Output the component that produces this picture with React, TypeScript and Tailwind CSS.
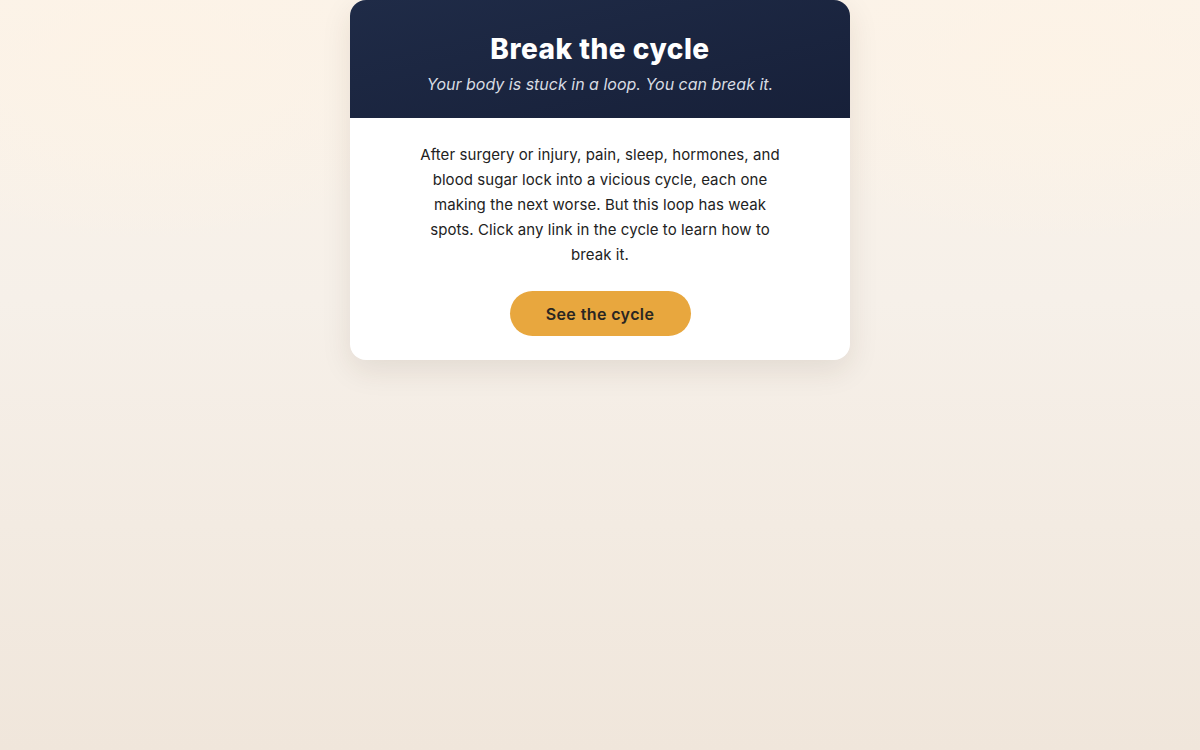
import React from "react";

export default function App() {
  return (
    <div
      className="w-full min-h-[750px] flex justify-center items-start"
      style={{
        background:
          "radial-gradient(ellipse 40% 35% at 12% 8%, rgba(253,243,230,0.9), rgba(253,243,230,0) 70%), radial-gradient(ellipse 40% 35% at 88% 8%, rgba(253,243,230,0.9), rgba(253,243,230,0) 70%), linear-gradient(to bottom, #fbf3e9 0%, #f6f0e9 40%, #f0e6db 100%)",
        fontFamily: "Inter, 'Noto Sans', sans-serif",
      }}
    >
      <div className="w-[500px] rounded-2xl overflow-hidden bg-white shadow-[0_10px_30px_rgba(60,40,20,0.10)]">
        <div className="bg-gradient-to-br from-[#1f2b47] to-[#172039] pt-[30px] pb-[22px] text-center">
          <h1 className="text-[28px] leading-[38px] font-extrabold text-white tracking-[0.5px]">
            Break the cycle
          </h1>
          <p className="mt-[4px] text-[16px] leading-[24px] italic text-[#d8dce3]">
            Your body is stuck in a loop. You can break it.
          </p>
        </div>
        <div className="pt-[24px] pb-[24px] flex flex-col items-center">
          <p className="max-w-[376px] text-center text-[15px] leading-[25px] text-[#222222] tracking-[0.08px]">
            After surgery or injury, pain, sleep, hormones, and blood sugar lock into a vicious cycle, each one making the next worse. But this loop has weak spots. Click any link in the cycle to learn how to break it.
          </p>
          <button className="mt-[24px] w-[181px] h-[45px] rounded-full bg-[#e8a73e] text-[16px] font-semibold text-[#2a2622] tracking-[0.4px]">
            See the cycle
          </button>
        </div>
      </div>
    </div>
  );
}
